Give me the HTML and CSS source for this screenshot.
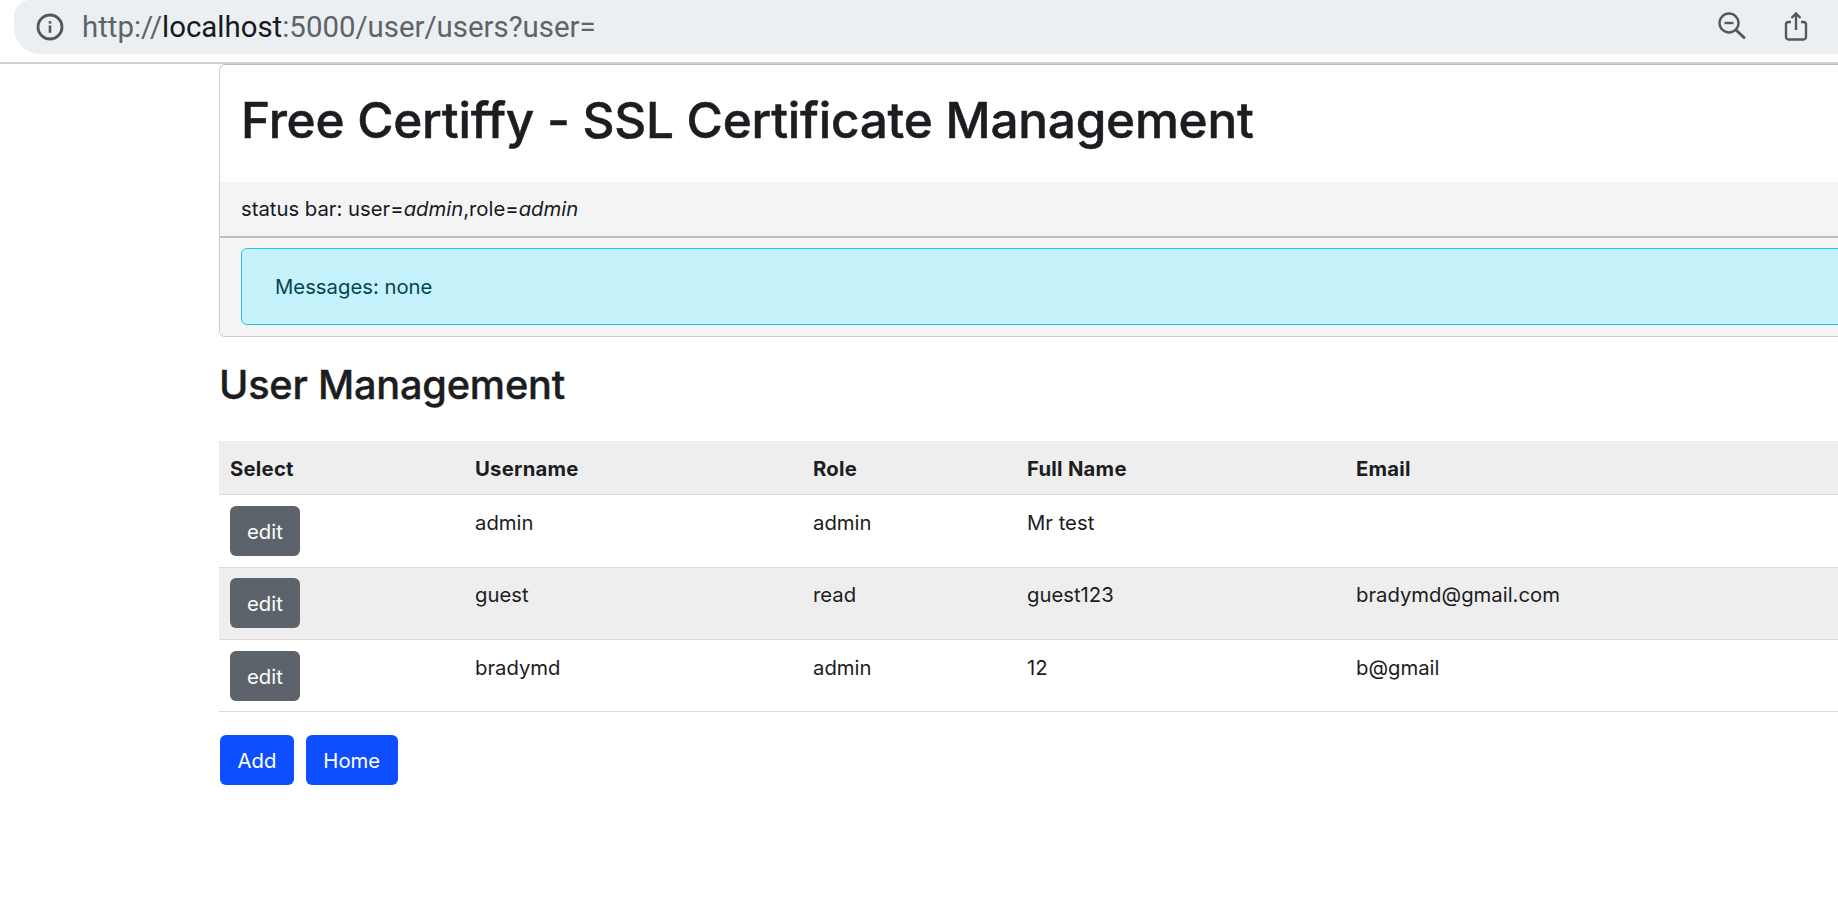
FILE: index.html
```html
<!DOCTYPE html>
<html lang="en">
<head>
    <meta charset="UTF-8">
    <meta name="viewport" content="width=device-width, initial-scale=1.0">
    <title>Free Certiffy - User Management</title>
    <link rel="stylesheet" href="styles.css">
</head>
<body>

<div class="browser-bar">
    <div class="address">
        <svg class="icon-info" width="28" height="28" viewBox="0 0 28 28">
            <circle cx="14" cy="14" r="12" fill="none" stroke="#54585c" stroke-width="2.8"/>
            <rect x="12.7" y="12.4" width="2.6" height="7.4" fill="#54585c"/>
            <rect x="12.7" y="8.2" width="2.6" height="2.4" fill="#54585c"/>
        </svg>
        <span class="url">http://<b>localhost</b>:5000/user/users?user=</span>
        <svg class="icon-zoom" width="28" height="27" viewBox="0 0 28 27">
            <circle cx="11" cy="11" r="9.500" fill="none" stroke="#55595d" stroke-width="2.400"/>
            <path d="M6.500 11h9" stroke="#55595d" stroke-width="2.400"/>
            <path d="M18 18l8 7.500" stroke="#55595d" stroke-width="3" stroke-linecap="round"/>
        </svg>
        <svg class="icon-share" width="24" height="30" viewBox="0 0 24 30">
            <path d="M7 11H4.500A2.500 2.500 0 0 0 2 13.500V26A2.500 2.500 0 0 0 4.500 28.500H19.500A2.500 2.500 0 0 0 22 26V13.500A2.500 2.500 0 0 0 19.500 11H17" fill="none" stroke="#55595d" stroke-width="2.400"/>
            <path d="M12 19V3M7.500 7 12 2.500 16.500 7" fill="none" stroke="#55595d" stroke-width="2.400"/>
        </svg>
    </div>
</div>

<div class="container">
    <div class="card">
        <h1>Free Certiffy - SSL Certificate Management</h1>
        <div class="status">status bar: user=<em>admin</em>,role=<em>admin</em></div>
        <div class="messages">
            <div class="alert">Messages: none</div>
        </div>
    </div>

    <h2>User Management</h2>

    <table class="users">
        <thead>
            <tr>
                <th class="col-select">Select</th>
                <th class="col-username">Username</th>
                <th class="col-role">Role</th>
                <th class="col-name">Full Name</th>
                <th>Email</th>
            </tr>
        </thead>
        <tbody>
            <tr>
                <td><a class="btn btn-edit">edit</a></td>
                <td>admin</td>
                <td>admin</td>
                <td>Mr test</td>
                <td></td>
            </tr>
            <tr class="striped">
                <td><a class="btn btn-edit">edit</a></td>
                <td>guest</td>
                <td>read</td>
                <td>guest123</td>
                <td>bradymd@gmail.com</td>
            </tr>
            <tr>
                <td><a class="btn btn-edit">edit</a></td>
                <td>bradymd</td>
                <td>admin</td>
                <td>12</td>
                <td>b@gmail</td>
            </tr>
        </tbody>
    </table>

    <div class="actions">
        <a class="btn btn-primary">Add</a>
        <a class="btn btn-primary">Home</a>
    </div>
</div>

</body>
</html>
```

FILE: styles.css
```css
html, body {
    margin: 0;
    padding: 0;
    height: 100%;
    overflow: hidden;
    background-color: #fff;
}
body {
    font-family: Inter, "Noto Sans", sans-serif;
    font-size: 20.3px;
    line-height: 28px;
    color: #1b1d21;
}

/* browser chrome */
.browser-bar {
    height: 62px;
    border-bottom: 2px solid #d2d2d2;
    padding-left: 14px;
}
.address {
    height: 54px;
    background-color: #ebeff1;
    border-radius: 16px 0 0 26px;
    display: flex;
    align-items: center;
    padding: 0 30px 0 22px;
}
.url {
    flex: 1;
    margin-left: 18px;
    font-family: Roboto, sans-serif;
    font-size: 29.4px;
    color: #5f6368;
}
.url b {
    font-weight: 400;
    color: #17191c;
}
.icon-zoom {
    margin: 0 38px 3px 0;
}
.icon-share {
    margin-bottom: 2px;
}

/* page */
.container {
    margin-left: 219px;
    width: 1900px;
}
.card {
    border: 1px solid #ccc;
    border-top-color: #bbb;
    border-radius: 6px;
    overflow: hidden;
}
h1 {
    margin: 0;
    padding: 25px 21px 0;
    height: 92px;
    font-size: 49.5px;
    line-height: 60px;
    font-weight: 500;
    letter-spacing: -0.25px;
    -webkit-text-stroke: 0.5px #1b1d21;
}
.status {
    height: 54px;
    line-height: 54px;
    padding-left: 21px;
    background-color: #f4f4f4;
    border-bottom: 2px solid #bdbdbd;
    color: #17191c;
}
.messages {
    background-color: #f4f4f4;
    padding: 10px 21px 11px;
}
.alert {
    height: 77px;
    box-sizing: border-box;
    line-height: 75px;
    padding-left: 33px;
    background-color: #c5f2fb;
    border: 1px solid #20c6ec;
    border-radius: 6px;
    color: #074452;
}
h2 {
    margin: 0;
    padding-top: 24px;
    height: 80px;
    font-size: 39.7px;
    line-height: 48px;
    font-weight: 500;
    letter-spacing: -0.2px;
    -webkit-text-stroke: 0.4px #1b1d21;
}

.users {
    width: 100%;
    border-collapse: collapse;
    table-layout: fixed;
}
.col-select { width: 223px; }
.col-username { width: 316px; }
.col-role { width: 192px; }
.col-name { width: 307px; }
.users th {
    height: 51px;
    padding: 2px 11px 0;
    text-align: left;
    font-weight: 700;
    letter-spacing: 0.25px;
    background-color: #eee;
    border-bottom: 1px solid #d8dadc;
}
.users td {
    height: 72px;
    box-sizing: border-box;
    padding: 14px 11px 0;
    vertical-align: top;
    border-bottom: 1px solid #d8dadc;
}
.users tbody tr:first-child td {
    height: 73px;
}
.users td:first-child {
    padding-top: 11px;
}
.striped td {
    padding-top: 13px;
    background-color: #eee;
}
.users .striped td:first-child {
    padding-top: 10px;
}

.btn {
    display: inline-block;
    height: 50px;
    line-height: 51px;
    padding: 0 17.500px;
    border-radius: 6px;
    color: #fff;
}
.btn-edit {
    padding: 0 17px;
    background-color: #5c636a;
}
.btn-primary {
    background-color: #0d4fff;
}
.actions {
    display: flex;
    gap: 12px;
    padding: 23px 1px 0;
}
```
